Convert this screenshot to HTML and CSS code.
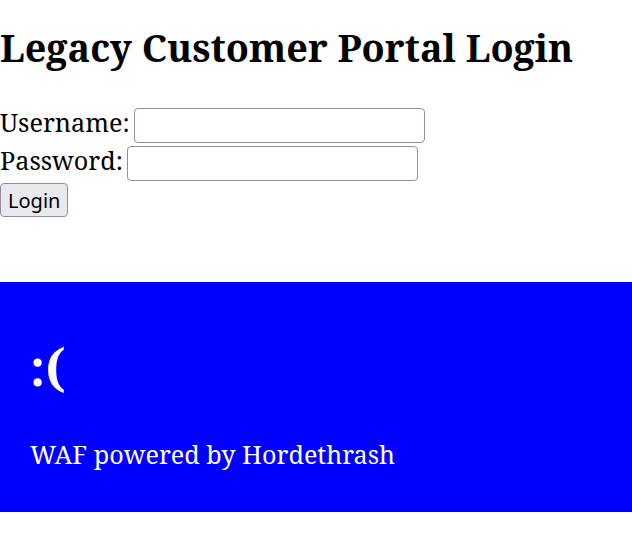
FILE: index.html
```html
<!DOCTYPE html>
<html>
<head>
<meta charset="utf-8">
<title>Legacy Customer Portal Login</title>
<link rel="stylesheet" href="styles.css">
</head>
<body>
<h1 class="title">Legacy Customer Portal Login</h1>
<form class="login">
<label class="row">Username: <input class="field" type="text"></label>
<label class="row">Password: <input class="field" type="password"></label>
<button class="btn" type="button">Login</button>
</form>
<div class="waf">
<div class="face">:(</div>
<p class="note">WAF powered by Hordethrash</p>
</div>
</body>
</html>
```
FILE: styles.css
```css
body {
  margin: 0;
  font-family: "Noto Serif", "DejaVu Serif", serif;
  font-size: 25.2px;
}
.title {
  font-size: 37.8px;
  margin: 22px 0 32px;
}
.row {
  display: block;
  word-spacing: -2px;
}
.field {
  box-sizing: border-box;
  width: 291px;
  height: 35px;
  font: 19px "Noto Sans", sans-serif;
  border: 1px solid #8f8f9d;
  border-radius: 4px;
  background: #fff;
  padding: 1px 4px;
  vertical-align: middle;
}
.btn {
  box-sizing: border-box;
  height: 34px;
  font: 20px "Noto Sans", sans-serif;
  color: #000;
  background: #e9e9ed;
  border: 1px solid #8f8f9d;
  border-radius: 4px;
  padding: 0 7px;
}
.waf {
  background: #0000ff;
  color: #fff;
  margin-top: 65px;
  padding: 30px;
  height: 230px;
  box-sizing: border-box;
}
.face {
  font-size: 50px;
  font-weight: bold;
  margin: 21px 0 36px;
}
.note { margin: 0; }
```
